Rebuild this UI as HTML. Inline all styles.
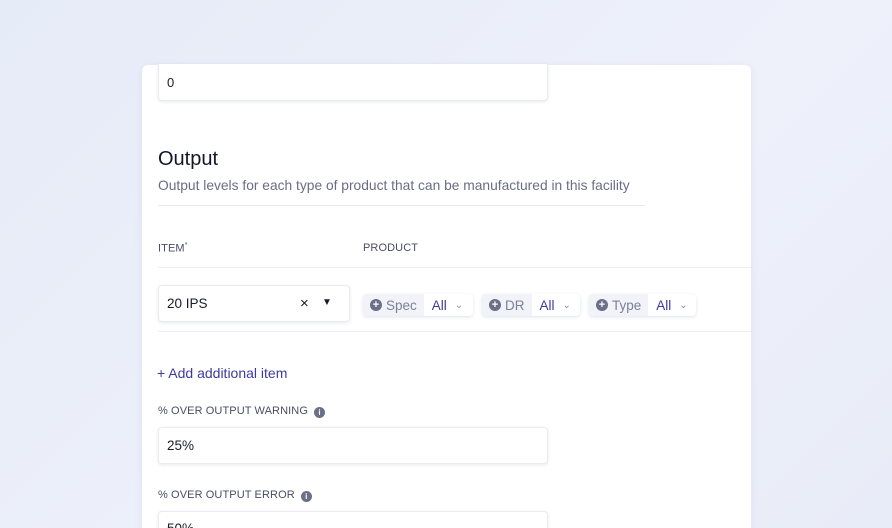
<!DOCTYPE html>
<html style="width:892px;height:528px;overflow:hidden"><head><style>
*{box-sizing:border-box;margin:0;padding:0}
body{width:892px;height:528px;overflow:hidden;font-family:"Liberation Sans",sans-serif;background:linear-gradient(135deg,#e6ebf8 0%,#eef1fa 60%,#e8ecf8 100%);position:relative}
.card{position:absolute;left:142px;top:65px;width:609px;height:463px;background:#fff;border-radius:6px 6px 0 0;box-shadow:0 2px 8px rgba(120,130,170,.12)}
.a{position:absolute}
.inp{position:absolute;background:#fff;border:1px solid #e9ebf1;border-radius:4px;box-shadow:0 1px 3px rgba(100,110,150,.15);font-size:13px;color:#1a1a2a;padding-left:8px;display:flex;align-items:center}
.lbl{font-size:11px;color:#4a4d63;letter-spacing:.1px}
.chip{position:absolute;top:294px;height:22px;border-radius:4px;background:#fff;box-shadow:0 1px 3px rgba(100,110,150,.2);display:flex;font-size:13.5px;overflow:hidden}
.chip .l{background:#f1f3f8;color:#7d8097;display:flex;align-items:center;padding:0 7px 0 7px;gap:4px}
.chip .r{color:#3c3a9e;display:flex;align-items:center;padding:0 8px;gap:8px}
.pl{width:12px;height:12px;border-radius:50%;background:#6b6f87;color:#fff;font-size:11px;line-height:12px;text-align:center;font-weight:bold}
.v{color:#8a8da3;font-size:10px}
.info{display:inline-block;width:11px;height:11px;border-radius:50%;background:#6b6f87;color:#fff;font-size:8px;line-height:11px;text-align:center;font-weight:bold;vertical-align:-1px;margin-left:6px}
</style></head><body>
<div class="card"></div>
<div class="inp" style="left:158px;top:64px;width:390px;height:37px;border-top:none;border-radius:0 0 4px 4px">0</div>
<div class="a" style="left:158px;top:148px;font-size:20px;color:#14142a">Output</div>
<div class="a" style="left:158px;top:178px;font-size:13.8px;color:#6a6d85">Output levels for each type of product that can be manufactured in this facility</div>
<div class="a" style="left:158px;top:205px;width:487px;height:1px;background:#e6e8ee"></div>
<div class="a lbl" style="left:158px;top:242px">ITEM<sup style="font-size:7px">*</sup></div>
<div class="a lbl" style="left:363px;top:242px">PRODUCT</div>
<div class="a" style="left:158px;top:267px;width:593px;height:1px;background:#eceef3"></div>
<div class="inp" style="left:158px;top:285px;width:192px;height:37px;font-size:13.5px">20 IPS<span class="a" style="left:141px;top:9px;font-size:15px">×</span><span class="a" style="left:163px;top:11px;font-size:10px">▼</span></div>
<div class="chip" style="left:363px;width:110px"><div class="l"><span class="pl">+</span>Spec</div><div class="r">All<span class="v">⌄</span></div></div>
<div class="chip" style="left:482px;width:98px"><div class="l"><span class="pl">+</span>DR</div><div class="r">All<span class="v">⌄</span></div></div>
<div class="chip" style="left:589px;width:107px"><div class="l"><span class="pl">+</span>Type</div><div class="r">All<span class="v">⌄</span></div></div>
<div class="a" style="left:158px;top:331px;width:593px;height:1px;background:#eceef3"></div>
<div class="a" style="left:157px;top:365px;font-size:14px;color:#3d3a9f">+ Add additional item</div>
<div class="a lbl" style="left:158px;top:405px">% OVER OUTPUT WARNING<span class="info">i</span></div>
<div class="inp" style="left:158px;top:427px;width:390px;height:37px;font-size:13.5px">25%</div>
<div class="a lbl" style="left:158px;top:489px">% OVER OUTPUT ERROR<span class="info">i</span></div>
<div class="inp" style="left:158px;top:511px;width:390px;height:17px;border-bottom:none;border-radius:4px 4px 0 0;align-items:flex-start;padding-top:9px;overflow:hidden;font-size:13.5px">50%</div>
</body></html>
